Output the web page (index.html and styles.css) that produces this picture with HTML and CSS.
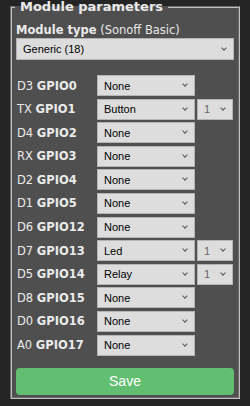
FILE: index.html
```html
<!DOCTYPE html>
<html lang="en">
<head>
  <meta charset="UTF-8">
  <meta name="viewport" content="width=device-width, initial-scale=1.0">
  <title>Configure Module</title>
  <link rel="stylesheet" href="styles.css">
</head>
<body>
  <fieldset class="params">
    <legend>Module parameters</legend>
    <form id="moduleForm">
      <p class="type-label"><b>Module type</b> (Sonoff Basic)</p>
      <div class="pick wide">
        <select id="module"><option>Generic (18)</option></select>
      </div>

      <div class="gpio-list">
        <div class="gpio-row">
          <label class="gpio-name">D3 <b>GPIO0</b></label>
          <div class="pick"><select><option>None</option></select></div>
        </div>
        <div class="gpio-row">
          <label class="gpio-name">TX <b>GPIO1</b></label>
          <div class="pick"><select><option>Button</option></select></div>
          <div class="pick idx"><select><option>1</option></select></div>
        </div>
        <div class="gpio-row">
          <label class="gpio-name">D4 <b>GPIO2</b></label>
          <div class="pick"><select><option>None</option></select></div>
        </div>
        <div class="gpio-row">
          <label class="gpio-name">RX <b>GPIO3</b></label>
          <div class="pick"><select><option>None</option></select></div>
        </div>
        <div class="gpio-row">
          <label class="gpio-name">D2 <b>GPIO4</b></label>
          <div class="pick"><select><option>None</option></select></div>
        </div>
        <div class="gpio-row">
          <label class="gpio-name">D1 <b>GPIO5</b></label>
          <div class="pick"><select><option>None</option></select></div>
        </div>
        <div class="gpio-row">
          <label class="gpio-name">D6 <b>GPIO12</b></label>
          <div class="pick"><select><option>None</option></select></div>
        </div>
        <div class="gpio-row">
          <label class="gpio-name">D7 <b>GPIO13</b></label>
          <div class="pick"><select><option>Led</option></select></div>
          <div class="pick idx"><select><option>1</option></select></div>
        </div>
        <div class="gpio-row">
          <label class="gpio-name">D5 <b>GPIO14</b></label>
          <div class="pick"><select><option>Relay</option></select></div>
          <div class="pick idx"><select><option>1</option></select></div>
        </div>
        <div class="gpio-row">
          <label class="gpio-name">D8 <b>GPIO15</b></label>
          <div class="pick"><select><option>None</option></select></div>
        </div>
        <div class="gpio-row">
          <label class="gpio-name">D0 <b>GPIO16</b></label>
          <div class="pick"><select><option>None</option></select></div>
        </div>
        <div class="gpio-row">
          <label class="gpio-name">A0 <b>GPIO17</b></label>
          <div class="pick"><select><option>None</option></select></div>
        </div>
      </div>

      <button type="submit" class="save">Save</button>
    </form>
  </fieldset>
</body>
</html>
```

FILE: styles.css
```css
body {
  margin: 0;
  padding: 0 8px;
  background: #252525;
  color: #eaeaea;
  font-family: "DejaVu Sans", Verdana, sans-serif;
  font-size: 11px;
}
.params {
  margin: 0 2px;
  padding: 0 4px 2px;
  background: #4f4f4f;
  border: 2px groove #c0c0c0;
}
.params legend {
  margin-left: -1px;
  padding: 0 5px;
  font-size: 13px;
  font-weight: bold;
  line-height: 13px;
}
.type-label {
  margin: 10px 0 1px;
  font-size: 11.5px;
  line-height: 14px;
}
.pick {
  position: relative;
  width: 98px;
  height: 21px;
}
.pick.wide {
  width: 100%;
  height: 22px;
}
.pick.idx {
  width: 36px;
  margin-left: 2px;
}
.pick::after {
  content: "";
  position: absolute;
  right: 8px;
  top: 7px;
  width: 3px;
  height: 3px;
  border-right: 1px solid #555;
  border-bottom: 1px solid #555;
  transform: rotate(45deg);
  pointer-events: none;
}
.pick.wide::after {
  top: 8px;
}
select {
  -webkit-appearance: none;
  appearance: none;
  box-sizing: border-box;
  width: 100%;
  height: 100%;
  margin: 0;
  padding: 0 6px;
  background: #dddddd;
  border: 1px solid #b4b4b4;
  border-radius: 0;
  color: #000;
  font-family: "Liberation Sans", Arial, sans-serif;
  font-size: 11px;
}
.idx select {
  color: #666;
}
.gpio-list {
  margin-top: 15px;
}
.gpio-row {
  display: flex;
  align-items: center;
  height: 21px;
  margin-bottom: 2.6px;
}
.gpio-name {
  width: 81px;
  padding-left: 1px;
  box-sizing: border-box;
  font-size: 11.5px;
}
.save {
  display: block;
  width: 100%;
  height: 27px;
  margin-top: 12.4px;
  padding: 0;
  background: #62be70;
  color: #fff;
  border: none;
  border-radius: 4px;
  font-family: "Liberation Sans", Arial, sans-serif;
  font-size: 14px;
  cursor: pointer;
}
```
